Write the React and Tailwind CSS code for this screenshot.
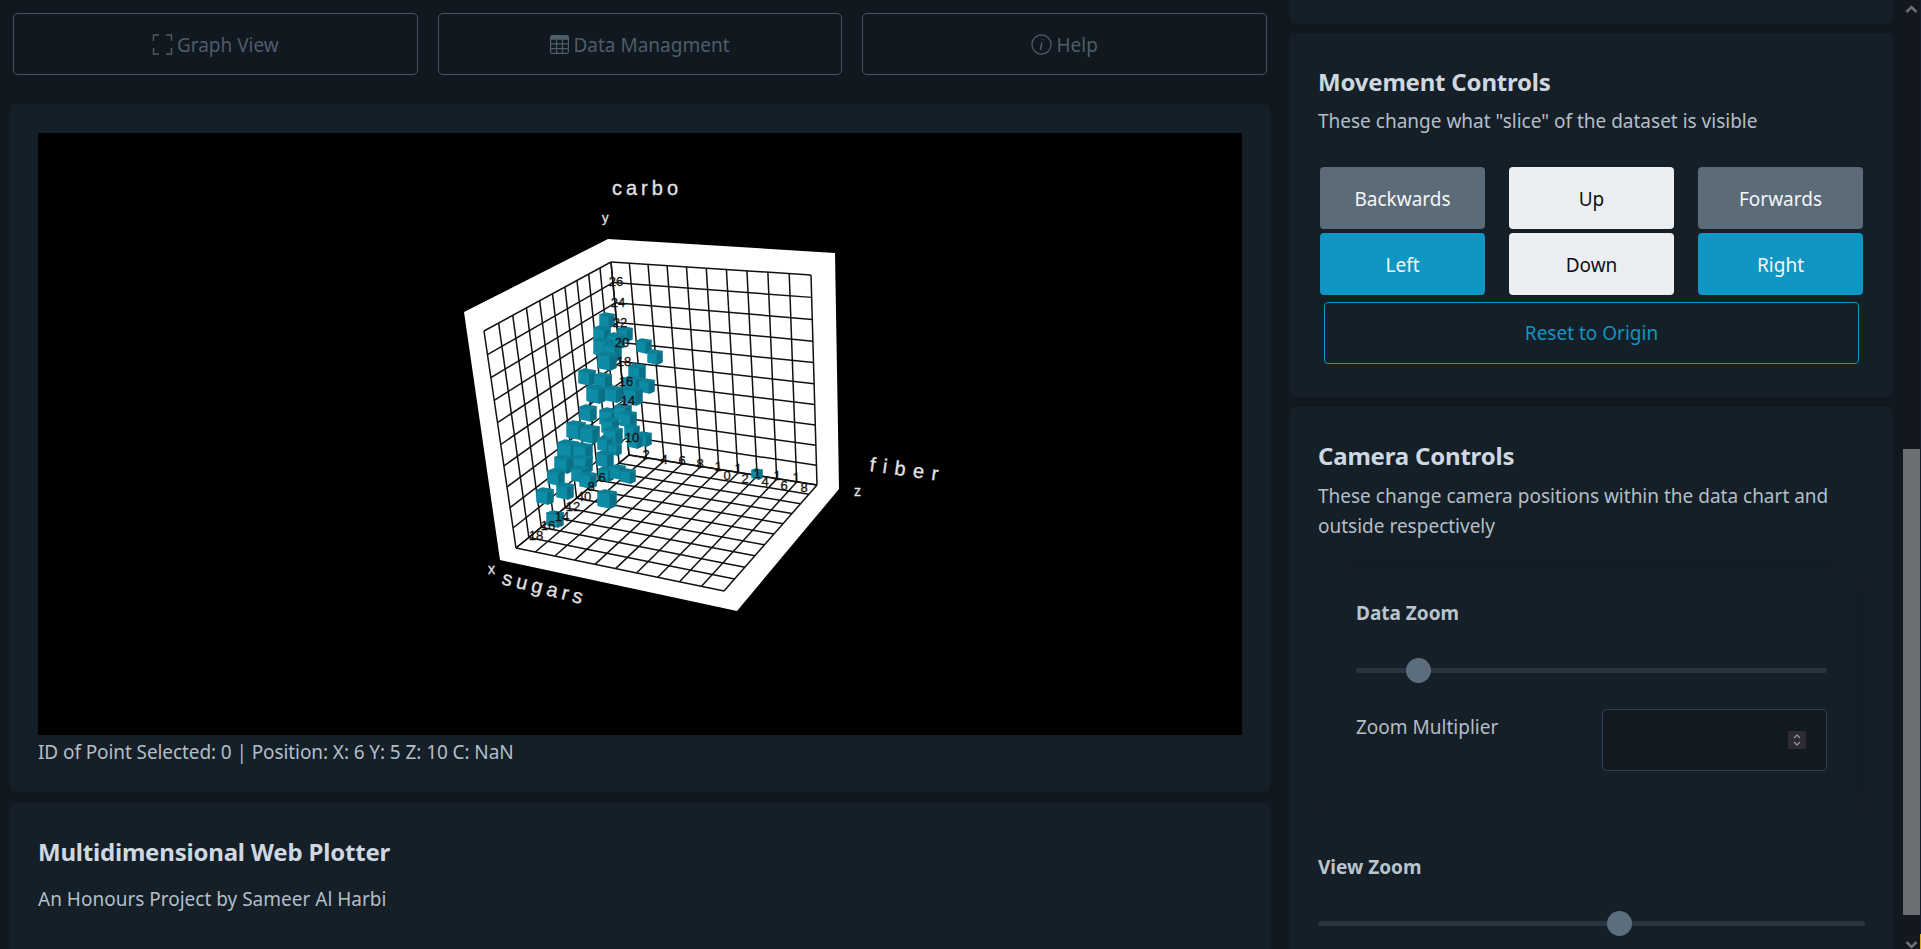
import React from "react";
import { BsTable } from "react-icons/bs";

// solve the square -> quad projective map so the grid lines get real perspective
function quadMap([p0, p1, p2, p3]) {
  const dx1 = p1[0] - p2[0];
  const dx2 = p3[0] - p2[0];
  const dy1 = p1[1] - p2[1];
  const dy2 = p3[1] - p2[1];
  const sx = p0[0] - p1[0] + p2[0] - p3[0];
  const sy = p0[1] - p1[1] + p2[1] - p3[1];
  const den = dx1 * dy2 - dx2 * dy1;
  const g = (sx * dy2 - dx2 * sy) / den;
  const h = (dx1 * sy - sx * dy1) / den;
  const a = p1[0] - p0[0] + g * p1[0];
  const b = p3[0] - p0[0] + h * p3[0];
  const d = p1[1] - p0[1] + g * p1[1];
  const e = p3[1] - p0[1] + h * p3[1];
  return (u, v) => {
    const w = g * u + h * v + 1;
    return [(a * u + b * v + p0[0]) / w, (d * u + e * v + p0[1]) / w];
  };
}

function Grid({ quad }) {
  const map = quadMap(quad);
  const lines = [];
  for (let i = 0; i <= 10; i++) {
    const t = i / 10;
    lines.push([map(t, 0), map(t, 1)]);
    lines.push([map(0, t), map(1, t)]);
  }
  return lines.map((l, i) => (
    <line key={i} x1={l[0][0]} y1={l[0][1]} x2={l[1][0]} y2={l[1][1]} stroke="#111" strokeWidth="1.5" />
  ));
}

// x, y is the middle of the cube; the faces overlap a bit to read as soft blocks
function Cube({ x, y, s = 9 }) {
  const top = y - s;
  const t = s * 0.28;
  const lx = x - s;
  const mx = x + s * 0.35;
  const rx = x + s;
  return (
    <g strokeLinejoin="round" strokeWidth="1.5">
      <polygon points={`${lx},${top + t} ${mx},${top + t * 1.6} ${mx},${y + s} ${lx},${y + s - t}`} fill="#0e8ca5" stroke="#0e8ca5" />
      <polygon points={`${mx},${top + t * 1.6} ${rx},${top + t * 0.8} ${rx},${y + s - t} ${mx},${y + s}`} fill="#0a7087" stroke="#0a7087" />
      <polygon points={`${lx},${top + t} ${x - s * 0.3},${top} ${rx},${top + t * 0.8} ${mx},${top + t * 1.6}`} fill="#0c7f97" stroke="#0c7f97" />
    </g>
  );
}

const cubes = [
  [607, 320, 7], [602, 334, 8], [625, 334, 7], [616, 341, 8], [603, 347, 9], [612, 352, 9], [644, 346, 7], [655, 357, 7],
  [607, 361, 9], [637, 372, 8], [587, 377, 8], [603, 381, 8], [633, 385, 9], [647, 386, 7], [596, 394, 9],
  [614, 394, 8], [633, 396, 9], [588, 413, 8], [609, 417, 9], [623, 412, 8], [628, 419, 8], [576, 430, 9],
  [590, 434, 9], [610, 426, 8], [613, 436, 9], [632, 432, 7], [644, 439, 7], [635, 441, 7], [605, 444, 7],
  [615, 449, 6], [568, 450, 10], [583, 452, 9], [605, 459, 8], [583, 464, 9], [564, 464, 9], [580, 474, 8],
  [556, 477, 8], [588, 480, 8], [565, 491, 8], [545, 496, 8], [606, 474, 7], [618, 472, 7], [628, 476, 7],
  [607, 499, 9], [555, 519, 8], [757, 474, 5],
];

const numbers = [
  ["26", 616, 286], ["24", 618, 307], ["22", 620, 327], ["20", 622, 347], ["18", 624, 366], ["16", 626, 386],
  ["14", 628, 405], ["10", 632, 442], ["2", 646, 459], ["4", 664, 464], ["6", 682, 465], ["8", 700, 468],
  ["1", 718, 471], ["0", 727, 480], ["1", 738, 473], ["2", 745, 483], ["1", 757, 478], ["4", 765, 486],
  ["1", 777, 480], ["6", 784, 490], ["1", 796, 482], ["8", 804, 492], ["6", 602, 482], ["8", 591, 491],
  ["40", 584, 501], ["12", 573, 511], ["14", 562, 521], ["16", 548, 530], ["18", 536, 540],
];

function Plot() {
  // all the coordinates below are page pixels, the viewBox offsets them to the canvas
  return (
    <svg viewBox="38 133 1204 602" className="block w-[1204px] h-[602px] bg-black" style={{ fontFamily: "'Liberation Sans', sans-serif" }}>
      <polygon points="608,239 835,253 839,489 737,611 500,560 464,312" fill="#fff" />
      <Grid quad={[[484, 331], [611, 262], [629, 455], [516, 548]]} />
      <Grid quad={[[611, 262], [811, 275], [817, 485], [629, 455]]} />
      <Grid quad={[[629, 455], [817, 485], [724, 591], [516, 548]]} />
      {cubes.map((c, i) => (
        <Cube key={i} x={c[0]} y={c[1]} s={c[2]} />
      ))}
      {numbers.map((n, i) => (
        <text key={i} x={n[1]} y={n[2]} textAnchor="middle" fontSize="13" fill="#111" stroke="#111" strokeWidth="0.3">{n[0]}</text>
      ))}
      <g fill="#e2e2e2" stroke="#e2e2e2" strokeWidth="0.3">
        <text x="612" y="195" fontSize="20" letterSpacing="4">carbo</text>
        <text x="602" y="222" fontSize="13">y</text>
        <text x="869" y="471" fontSize="20" letterSpacing="7.500" transform="rotate(8 869 471)">fiber</text>
        <text x="854" y="496" fontSize="14">z</text>
        <text x="488" y="574" fontSize="14">x</text>
        <text x="501" y="584" fontSize="20" letterSpacing="4.500" transform="rotate(14 501 584)">sugars</text>
      </g>
    </svg>
  );
}

function CornersIcon() {
  return (
    <svg viewBox="0 0 21 21" className="w-[21px] h-[21px]" fill="none" stroke="currentColor" strokeWidth="1.4">
      <path d="M7 1H1.5v6M14 1h5.5v6M1.5 14v6H7M19.500 14v6H14" />
    </svg>
  );
}

function InfoIcon() {
  return (
    <svg viewBox="0 0 21 21" className="w-[21px] h-[21px]" fill="none" stroke="currentColor" strokeWidth="1.2">
      <circle cx="10.5" cy="10.500" r="9.600" />
      <path d="M11.800 5.500v.6M11 8.500l-1.500 6.200q-.2 1 1 .6" strokeWidth="1.500" />
    </svg>
  );
}

function NavButton({ icon, label }) {
  return (
    <button className="h-[62px] flex items-center justify-center gap-[4px] rounded-[5px] border border-[#46545f] text-[#4c5d6c] text-[19px]">
      {icon}
      <span className="pt-[3px]">{label}</span>
    </button>
  );
}

function Slider({ thumb }) {
  return (
    <div className="relative h-[5px] rounded-full bg-[#263540]">
      <div className={`absolute -top-[10px] w-[25px] h-[25px] rounded-full bg-[#5c6e7e] ${thumb}`} />
    </div>
  );
}

function MoveButton({ label, tone }) {
  return <button className={`h-[62px] pt-[2px] rounded-[4px] text-[19px] ${tone}`}>{label}</button>;
}

const gray = "bg-[#5c6b78] text-[#f4f6f8]";
const light = "bg-[#eceff2] text-[#0d1014]";
const blue = "bg-[#0f96c2] text-[#f4f6f8]";

export default function App() {
  return (
    <div className="h-screen overflow-hidden flex bg-[#11181f] text-[#b3bec7] text-[19px]" style={{ fontFamily: "'Noto Sans', sans-serif" }}>
      {/* main column */}
      <div className="w-[1280px] shrink-0">
        <div className="grid grid-cols-3 gap-5 pt-[13px] pl-[13px] pr-[13px]">
          <NavButton icon={<CornersIcon />} label="Graph View" />
          <NavButton icon={<BsTable size={19} />} label="Data Managment" />
          <NavButton icon={<InfoIcon />} label="Help" />
        </div>
        <div className="mt-[29px] mx-[10px] h-[688px] rounded-[5px] bg-[#151f28] pt-[29px] px-[28px]">
          <Plot />
          <p className="mt-[2px] leading-[30px] tracking-[-0.09px]">ID of Point Selected: 0 | Position: X: 6 Y: 5 Z: 10 C: NaN</p>
        </div>
        <div className="mt-[11px] mx-[10px] h-[200px] rounded-[5px] bg-[#151f28] pt-[32px] px-[28px]">
          <h1 className="text-[24px] tracking-[-0.2px] leading-[34px] font-bold text-[#cfd8e0]">Multidimensional Web Plotter</h1>
          <p className="mt-[15px] leading-[30px]">An Honours Project by Sameer Al Harbi</p>
        </div>
      </div>

      {/* controls column */}
      <div className="w-[623px] shrink-0 px-[10px]">
        <div className="h-[24px] mb-[9px] rounded-b-[5px] bg-[#151f28]" />
        <div className="h-[364px] mb-[10px] rounded-[5px] bg-[#151f28] pt-[32px] px-[28px]">
          <h2 className="text-[24px] tracking-[-0.2px] leading-[34px] font-bold text-[#cfd8e0]">Movement Controls</h2>
          <p className="mt-[7px] leading-[30px]">These change what "slice" of the dataset is visible</p>
          <div className="grid grid-cols-3 gap-x-6 gap-y-1 mt-[31px] ml-[2px] w-[543px]">
            <MoveButton label="Backwards" tone={gray} />
            <MoveButton label="Up" tone={light} />
            <MoveButton label="Forwards" tone={gray} />
            <MoveButton label="Left" tone={blue} />
            <MoveButton label="Down" tone={light} />
            <MoveButton label="Right" tone={blue} />
          </div>
          <button className="mt-[7px] ml-[6px] w-[535px] h-[62px] pt-[1px] rounded-[4px] border border-[#0f96c2] text-[#0f96c2]">
            Reset to Origin
          </button>
        </div>
        <div className="h-[600px] rounded-[5px] bg-[#151f28] pt-[32px] px-[28px]">
          <h2 className="text-[24px] tracking-[-0.2px] leading-[34px] font-bold text-[#cfd8e0]">Camera Controls</h2>
          <p className="mt-[8px] leading-[30px]">These change camera positions within the data chart and outside respectively</p>
          <div className="mt-[27px] ml-[9px] w-[529px] h-[250px] bg-[#151f28] shadow-[0_0_30px_rgba(0,0,0,0.12)] pt-[28px] px-[29px]">
            <h3 className="font-bold leading-[34px] text-[#b8c4ce]">Data Zoom</h3>
            <div className="mt-[38px]">
              <Slider thumb="left-[50px]" />
            </div>
            <div className="flex justify-between mt-[36px]">
              <label className="leading-[36px]">Zoom Multiplier</label>
              <div className="w-[225px] h-[62px] flex items-center justify-end pr-[20px] rounded-[4px] border border-[#2f4050] bg-[#12191f]">
                <div className="w-[18px] h-[18px] bg-[#2c2a33] flex items-center justify-center">
                  <svg viewBox="0 0 18 18" className="w-[18px] h-[18px]" fill="none" stroke="#9a9aa2" strokeWidth="1.2">
                    <path d="M6 7l3-3 3 3M6 11l3 3 3-3" />
                  </svg>
                </div>
              </div>
            </div>
          </div>
          <h3 className="mt-[32px] font-bold leading-[34px] text-[#b8c4ce]">View Zoom</h3>
          <div className="mt-[37px]">
            <Slider thumb="left-[289px]" />
          </div>
        </div>
      </div>

      {/* page scrollbar */}
      <div className="w-[18px] shrink-0 flex">
        <div className="w-[17px] flex flex-col items-center bg-[#13181e]">
          <svg viewBox="0 0 17 12" className="w-[17px] h-[12px] mt-[3px] shrink-0" fill="none" stroke="#6b6e73" strokeWidth="2.5">
            <path d="M3.5 9l5-5 5 5" />
          </svg>
          <div className="mt-[434px] w-full h-[466px] shrink-0 bg-[#6b6e73]" />
          <svg viewBox="0 0 17 12" className="w-[17px] h-[12px] mt-[24px] shrink-0" fill="none" stroke="#6b6e73" strokeWidth="2.5">
            <path d="M3.5 3l5 5 5-5" />
          </svg>
        </div>
        <div className="w-[1px] flex flex-col justify-end bg-[#13202b]">
          <div className="h-[15px] bg-[#e0a820]" />
        </div>
      </div>
    </div>
  );
}
